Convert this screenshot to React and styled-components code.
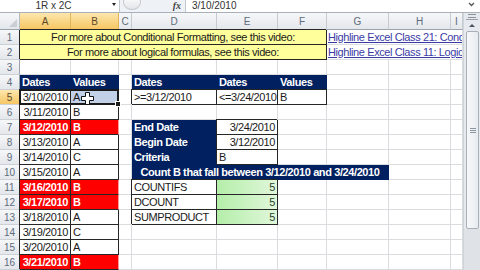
import React from "react";
import styled, { createGlobalStyle, css } from "styled-components";

const GlobalStyle = createGlobalStyle`
  html, body { margin: 0; padding: 0; background: #fff; }
  body {
    width: 480px;
    height: 270px;
    overflow: hidden;
    font-family: "Liberation Sans", Arial, sans-serif;
  }
`;

const COLS = [51, 48, 13, 85, 61, 49, 62, 62, 12];
const LETTERS = ["A", "B", "C", "D", "E", "F", "G", "H", "I"];

const Page = styled.div`
  width: 480px;
  height: 270px;
  display: flex;
  flex-direction: column;
  overflow: hidden;
`;

const FormulaBar = styled.div`
  height: 12px;
  display: flex;
  background: #eef1f5;
  border-bottom: 1px solid #a9b0b9;
  overflow: hidden;
  font-size: 10px;
  line-height: 11px;
  color: #333;
`;

const NameBox = styled.div`
  width: 120px;
  box-sizing: border-box;
  background: #fff;
  display: flex;
  justify-content: center;
  padding-right: 12px;
  position: relative;
  border-right: 1px solid #c3c8cf;
`;

const DropArrow = styled.span`
  position: absolute;
  right: 3px;
  top: 3px;
  border-left: 2.5px solid transparent;
  border-right: 2.5px solid transparent;
  border-top: 3px solid #222;
`;

const Tools = styled.div`
  width: 65px;
  display: flex;
  align-items: flex-start;
  justify-content: space-between;
  padding: 0 4px 0 3px;
  box-sizing: border-box;
`;

const Grip = styled.span`
  width: 16px;
  height: 14px;
  margin-top: -6px;
  border-radius: 50%;
  border: 1px solid #c4c9cf;
  background: linear-gradient(#ffffff, #e3e6ea);
`;

const Fx = styled.span`
  font-family: "Liberation Serif", serif;
  font-style: italic;
  font-weight: bold;
  font-size: 10px;
  color: #444;
`;

const Input = styled.div`
  flex: 1;
  background: #fff;
  border-left: 1px solid #c3c8cf;
  padding-left: 6px;
`;

const Expand = styled.div`
  width: 17px;
  display: flex;
  justify-content: center;
  align-items: flex-start;
  background: #fff;
  svg { margin-top: 2px; }
`;

const Body = styled.div`
  flex: 1;
  display: flex;
  min-height: 0;
`;

const Sheet = styled.div`
  position: relative;
  display: grid;
  grid-template-columns: 20px ${COLS.map((w) => w + "px").join(" ")};
  grid-template-rows: 17px repeat(16, 15px);
  background: #fff;
`;

const headBg = css`
  background: linear-gradient(#f6f7f9, #e4e7eb);
`;
const activeBg = css`
  background: linear-gradient(#fde7ad, #f6c663);
`;

const Corner = styled.div`
  grid-column: 1;
  grid-row: 1;
  ${headBg};
  border-right: 1px solid #b5bac1;
  border-bottom: 1px solid #9aa2ab;
  box-sizing: border-box;
  position: relative;
  &::after {
    content: "";
    position: absolute;
    right: 2px;
    bottom: 2px;
    border-left: 8px solid transparent;
    border-bottom: 8px solid #c9ced4;
  }
`;

const ColHead = styled.div`
  grid-column: ${(p) => p.$col};
  grid-row: 1;
  box-sizing: border-box;
  ${(p) => (p.$active ? activeBg : headBg)};
  border-right: 1px solid ${(p) => (p.$active ? "#e2b55a" : "#c6cbd1")};
  border-bottom: 1px solid #9aa2ab;
  display: flex;
  align-items: center;
  justify-content: center;
  font-size: 10px;
  color: ${(p) => (p.$active ? "#5b4a2a" : "#5d6b7b")};
  overflow: hidden;
`;

const RowHead = styled.div`
  grid-column: 1;
  grid-row: ${(p) => p.$row};
  box-sizing: border-box;
  ${(p) => (p.$active ? activeBg : headBg)};
  border-right: 1px solid #9aa2ab;
  border-bottom: 1px solid #cdd1d6;
  display: flex;
  align-items: center;
  justify-content: center;
  font-size: 10px;
  color: ${(p) => (p.$active ? "#5b4a2a" : "#5d6b7b")};
`;

const boxed = css`
  border-right-color: #262626;
  border-bottom-color: #262626;
  box-shadow: -1px -1px 0 0 #262626;
`;

const kinds = {
  plain: css``,
  box: boxed,
  note: css`
    ${boxed};
    background: #ffff9c;
  `,
  link: css`
    color: #3b3ba6;
    text-decoration: underline;
    padding-left: 1px;
  `,
  head: css`
    background: #002060;
    color: #fff;
    font-weight: bold;
    border-right-color: #002060;
    border-bottom-color: #002060;
  `,
  red: css`
    ${boxed};
    background: #ff0000;
    color: #fff;
    font-weight: bold;
    border-right-color: #ff9a9a;
  `,
  sel: css`
    ${boxed};
    background: #c3d1e8;
  `,
  good: css`
    ${boxed};
    background: linear-gradient(90deg, #b5eeaa, #e0f7da);
    color: #2f3f2f;
  `,
};

const Cell = styled.div`
  grid-column: ${(p) => p.$col} / span ${(p) => p.$span || 1};
  grid-row: ${(p) => p.$row};
  box-sizing: border-box;
  min-width: 0;
  overflow: hidden;
  white-space: nowrap;
  display: flex;
  align-items: center;
  justify-content: ${(p) =>
    p.$align === "right" ? "flex-end" : p.$align === "center" ? "center" : "flex-start"};
  padding: 0 2px;
  font-size: 11px;
  letter-spacing: -0.4px;
  color: #1a1a1a;
  background: #fff;
  border-right: 1px solid #dadcdf;
  border-bottom: 1px solid #dadcdf;
  ${(p) => kinds[p.$kind || "plain"]};
`;

const Selection = styled.div`
  grid-column: 2 / span 2;
  grid-row: 6;
  margin: -1px 0 0 -1px;
  border: 2px solid #1b1b1b;
  position: relative;
  pointer-events: none;
`;

const FillHandle = styled.span`
  position: absolute;
  right: -4px;
  bottom: -4px;
  width: 4px;
  height: 4px;
  background: #1b1b1b;
  border: 1px solid #fff;
`;

const Cursor = styled.svg`
  position: absolute;
  left: 60px;
  top: 1px;
`;

const Scrollbar = styled.div`
  width: 17px;
  display: flex;
  flex-direction: column;
  background: #e6e9ed;
  border-left: 1px solid #cfd4da;
  box-sizing: border-box;
`;

const SplitBox = styled.div`
  height: 6px;
  margin: 0 2px;
  border-bottom: 1px solid #9aa2ab;
  display: flex;
  align-items: center;
  justify-content: center;
  &::after {
    content: "";
    width: 8px;
    height: 2px;
    border-top: 1px solid #8a929c;
    border-bottom: 1px solid #8a929c;
  }
`;

const ArrowBtn = styled.div`
  height: 11px;
  display: flex;
  align-items: center;
  justify-content: center;
  &::after {
    content: "";
    border-left: 3px solid transparent;
    border-right: 3px solid transparent;
    border-bottom: 3px solid #4a535e;
  }
`;

const Thumb = styled.div`
  height: 196px;
  margin: 0 1px 0 2px;
  border: 1px solid #a8b0ba;
  border-radius: 2px;
  background: linear-gradient(90deg, #f7f8fa, #e8ebef);
  display: flex;
  align-items: center;
  justify-content: center;
  &::after {
    content: "";
    width: 6px;
    height: 5px;
    background: repeating-linear-gradient(#8d959f 0 1px, transparent 1px 2px);
  }
`;

const Track = styled.div`
  flex: 1;
  background: #dfe3e8;
`;

const dates = [10, 11, 12, 13, 14, 15, 16, 17, 18, 19, 20, 21];
const values = ["A", "B", "B", "A", "C", "A", "B", "B", "A", "C", "A", "B"];
const inRange = (d, v) => v === "B" && d >= 12 && d <= 24;

const specs = [
  { r: 1, c: 0, span: 6, text: "For more about Conditional Formatting, see this video:", kind: "note", align: "center" },
  { r: 1, c: 6, span: 3, text: "Highline Excel Class 21: Conditional Formatting", kind: "link" },
  { r: 2, c: 0, span: 6, text: "For more about logical formulas, see this video:", kind: "note", align: "center" },
  { r: 2, c: 6, span: 3, text: "Highline Excel Class 11: Logical Formulas", kind: "link" },
  { r: 4, c: 0, text: "Dates", kind: "head" },
  { r: 4, c: 1, text: "Values", kind: "head" },
  { r: 4, c: 3, text: "Dates", kind: "head" },
  { r: 4, c: 4, text: "Dates", kind: "head" },
  { r: 4, c: 5, text: "Values", kind: "head" },
  { r: 5, c: 3, text: ">=3/12/2010", kind: "box" },
  { r: 5, c: 4, text: "<=3/24/2010", kind: "box" },
  { r: 5, c: 5, text: "B", kind: "box" },
  { r: 7, c: 3, text: "End Date", kind: "head" },
  { r: 7, c: 4, text: "3/24/2010", kind: "box", align: "right" },
  { r: 8, c: 3, text: "Begin Date", kind: "head" },
  { r: 8, c: 4, text: "3/12/2010", kind: "box", align: "right" },
  { r: 9, c: 3, text: "Criteria", kind: "head" },
  { r: 9, c: 4, text: "B", kind: "box" },
  { r: 10, c: 3, span: 4, text: "Count B that fall between 3/12/2010 and 3/24/2010", kind: "head", align: "center" },
  { r: 11, c: 3, text: "COUNTIFS", kind: "box" },
  { r: 11, c: 4, text: "5", kind: "good", align: "right" },
  { r: 12, c: 3, text: "DCOUNT", kind: "box" },
  { r: 12, c: 4, text: "5", kind: "good", align: "right" },
  { r: 13, c: 3, text: "SUMPRODUCT", kind: "box" },
  { r: 13, c: 4, text: "5", kind: "good", align: "right" },
];

dates.forEach((d, i) => {
  const r = i + 5;
  const red = inRange(d, values[i]);
  specs.push({ r, c: 0, text: `3/${d}/2010`, kind: red ? "red" : "box", align: "right" });
  specs.push({ r, c: 1, text: values[i], kind: red ? "red" : r === 5 ? "sel" : "box" });
});

function buildCells() {
  const out = [];
  for (let r = 1; r <= 16; r++) {
    let c = 0;
    while (c < COLS.length) {
      const s = specs.find((x) => x.r === r && x.c === c);
      const span = s?.span || 1;
      out.push(
        <Cell
          key={`${r}-${c}`}
          $row={r + 1}
          $col={c + 2}
          $span={span}
          $kind={s?.kind}
          $align={s?.align}
        >
          {s?.text}
        </Cell>
      );
      c += span;
    }
  }
  return out;
}

export default function App() {
  return (
    <Page>
      <GlobalStyle />
      <FormulaBar>
        <NameBox>
          1R x 2C
          <DropArrow />
        </NameBox>
        <Tools>
          <Grip />
          <Fx>fx</Fx>
        </Tools>
        <Input>3/10/2010</Input>
        <Expand>
          <svg width="7" height="5" viewBox="0 0 7 5">
            <path d="M1 1 L3.5 3.5 L6 1" fill="none" stroke="#555" strokeWidth="1.3" />
          </svg>
        </Expand>
      </FormulaBar>
      <Body>
        <Sheet>
          <Corner />
          {LETTERS.map((l, i) => (
            <ColHead key={l} $col={i + 2} $active={i < 2}>
              {l}
            </ColHead>
          ))}
          {Array.from({ length: 16 }, (_, i) => (
            <RowHead key={i} $row={i + 2} $active={i === 4}>
              {i + 1}
            </RowHead>
          ))}
          {buildCells()}
          <Selection>
            <FillHandle />
            <Cursor width="13" height="13" viewBox="0 0 13 13">
              <path
                d="M4.5 0.5 H8.5 V4.5 H12.5 V8.5 H8.5 V12.5 H4.5 V8.5 H0.5 V4.5 H4.5 Z"
                fill="#fff"
                stroke="#111"
                strokeWidth="1"
              />
            </Cursor>
          </Selection>
        </Sheet>
        <Scrollbar>
          <SplitBox />
          <ArrowBtn />
          <Thumb />
          <Track />
        </Scrollbar>
      </Body>
    </Page>
  );
}
